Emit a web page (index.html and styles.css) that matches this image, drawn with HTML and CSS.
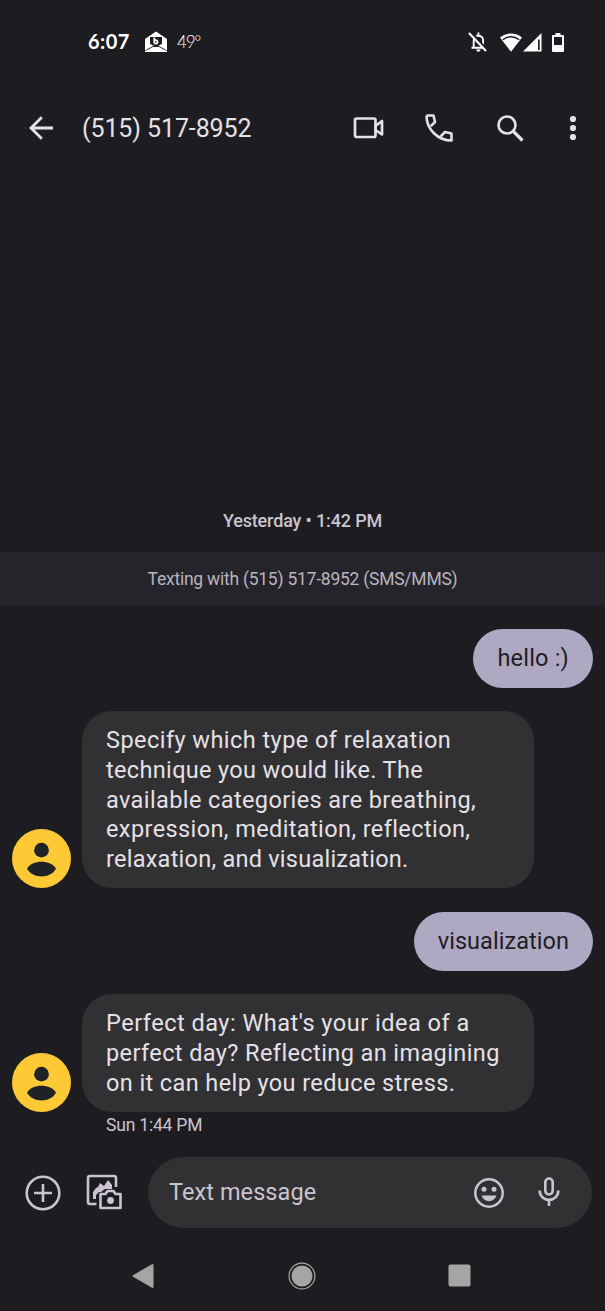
FILE: index.html
```html
<!DOCTYPE html>
<html lang="en">
<head>
<meta charset="utf-8">
<title>Messages</title>
<link rel="stylesheet" href="styles.css">
</head>
<body>
<div class="screen">
  <div class="status">
    <span class="clock">6:07</span>
    <svg class="mail" width="24" height="22" viewBox="0 0 24 22"><path fill="#fff" d="M1 8 12 .5 23 8v13H1z"/><path fill="#1d1c21" d="M6 6h12v6.800l-6 3.400-6-3.400z"/><path fill="none" stroke="#fff" stroke-width="1.800" d="M10.300 6.500v6M10.400 9.400c3-1.300 4.500 2.800 1.500 3.200l-1.500-.3"/><path fill="none" stroke="#1d1c21" stroke-width=".9" d="M1.500 19.500 9 15.500h6l7.500 4"/></svg>
    <span class="temp">49°</span>
    <svg class="bell" width="20" height="22" viewBox="0 0 20 22"><path fill="none" stroke="#fff" stroke-width="1.900" d="M3.500 16.800h14M5.700 16.500v-7c0-6.300 9.400-6.300 9.400 0v7M10.400 1.500v3"/><path fill="#fff" d="M8.300 18.500h4.200c0 3-4.200 3-4.200 0z"/><path stroke="#1d1c21" stroke-width="2.200" d="m3 1 16 17.800"/><path stroke="#fff" stroke-width="2" d="m1 2 17 18"/></svg>
    <svg class="wifi" width="22" height="19" viewBox="0 0 22 19"><path fill="#fff" d="M0 4.600C6-1 16-1 22 4.600L11 18.800z"/><path fill="none" stroke="#1d1c21" stroke-width="1.400" d="M2.800 6.700c4.800-4 11.600-4 16.400 0"/></svg>
    <svg class="signal" width="19" height="19" viewBox="0 0 19 19"><path fill="#fff" d="M18.500 0v18.500H0z"/><path fill="#1d1c21" d="M15 6.500h1.700v10.500H15z"/></svg>
    <svg class="battery" width="12" height="19" viewBox="0 0 12 19"><path fill="#fff" d="M3.500 0h5v2H11q1 0 1 1v15q0 1-1 1H1q-1 0-1-1V3q0-1 1-1h2.500z"/><path fill="#1d1c21" d="M2 4h8v8H2z"/></svg>
  </div>

  <header class="bar">
    <svg class="back" width="24" height="24" viewBox="0 0 24 24"><path fill="none" stroke="#e6e0e7" stroke-width="2.800" d="M24 12H2M12.800 1.200 2 12l10.800 10.800"/></svg>
    <h1 class="title">(515) 517-8952</h1>
    <svg class="video" width="32" height="22" viewBox="0 0 32 22"><g fill="none" stroke="#e6e0e7" stroke-width="2.700" stroke-linejoin="round"><rect x="2" y="1.500" width="20.500" height="18.500" rx="1.500"/><path d="M22.500 9 29 4v13.500L22.500 13z"/></g></svg>
    <svg class="phone" width="28" height="28" viewBox="0 0 28 28"><path fill="none" stroke="#e6e0e7" stroke-width="2.600" stroke-linejoin="round" d="M1.500 1.500h7L10 8 5.800 12.200M1.500 1.500C1.500 15.500 13 26.500 26.500 26.500v-7L20 18l-4.300 4.300"/></svg>
    <svg class="search" width="27" height="27" viewBox="0 0 27 27"><g fill="none" stroke="#e6e0e7" stroke-width="2.600"><circle cx="10" cy="10" r="8.500"/><path stroke-width="3.200" d="m16 16 9.500 9.500"/></g></svg>
    <svg class="more" width="8" height="26" viewBox="0 0 8 26"><g fill="#e6e0e7"><circle cx="4" cy="4" r="3.100"/><circle cx="4" cy="13" r="3.100"/><circle cx="4" cy="22" r="3.100"/></g></svg>
  </header>

  <main class="thread">
    <p class="date">Yesterday • 1:42 PM</p>
    <p class="notice">Texting with (515) 517-8952 (SMS/MMS)</p>
    <div class="row sent"><div class="bubble">hello :)</div></div>
    <div class="row">
      <svg class="avatar" viewBox="0 0 60 60"><circle cx="30" cy="30" r="30" fill="#fdc935"/><circle cx="30" cy="21.500" r="7.500" fill="#202326"/><path fill="#202326" d="M15.200 40.500C20 30.800 40 30.800 44.800 40.500 38.500 51 21.500 51 15.200 40.500z"/></svg>
      <div class="bubble"><span class="wider">Specify which type of relaxation</span><br><span class="snug">technique you would like. The</span><br>available categories are breathing,<br>expression, meditation, reflection,<br><span class="tight">relaxation, and visualization.</span></div>
    </div>
    <div class="row sent"><div class="bubble"><span class="narrow">visualization</span></div></div>
    <div class="row">
      <svg class="avatar" viewBox="0 0 60 60"><circle cx="30" cy="30" r="30" fill="#fdc935"/><circle cx="30" cy="21.500" r="7.500" fill="#202326"/><path fill="#202326" d="M15.200 40.500C20 30.800 40 30.800 44.800 40.500 38.500 51 21.500 51 15.200 40.500z"/></svg>
      <div class="bubble"><span class="widest">Perfect day: What's your idea of a</span><br>perfect day? Reflecting an imagining<br>on it can help you reduce stress.</div>
    </div>
    <p class="time">Sun 1:44 PM</p>
  </main>

  <div class="compose">
    <svg class="add" width="36" height="36" viewBox="0 0 36 36"><g fill="none" stroke="#cac4d0" stroke-width="2.600"><circle cx="18" cy="18" r="16.300"/><path d="M18 9v18M9 18h18"/></g></svg>
    <svg class="gallery" width="36" height="36" viewBox="0 0 36 36"><path fill="none" stroke="#cac4d0" stroke-width="2.600" d="M10.500 30H4q-2 0-2-2V4q0-2 2-2h24q2 0 2 2v9"/><path fill="#cac4d0" d="M7 25v-7l3-4 2-1 2-4 4 3 4-6 4 5v4h-7l-4 3h-2l-3 3v4z"/><path fill="none" stroke="#cac4d0" stroke-width="2.600" stroke-linejoin="round" d="M14.500 20h5l2-3h6l2 3h5v14h-20z"/><circle cx="24.500" cy="26.500" r="3.400" fill="#cac4d0"/></svg>
    <div class="field">
      <span class="placeholder">Text message</span>
      <svg class="emoji" width="30" height="30" viewBox="0 0 30 30"><circle cx="15" cy="15" r="13.700" fill="none" stroke="#cac4d0" stroke-width="2.500"/><g fill="#cac4d0"><circle cx="10" cy="11.300" r="2.500"/><circle cx="20" cy="11.300" r="2.500"/><path d="M7.500 17.500h15c-2.500 7.500-12.500 7.500-15 0z"/></g></svg>
      <svg class="mic" width="22" height="29" viewBox="0 0 22 29"><g fill="none" stroke="#cac4d0" stroke-width="2.600"><rect x="7.300" y="1.500" width="7.400" height="16" rx="3.700"/><path d="M1.700 13.500c0 12.500 18.600 12.500 18.600 0M11 22.500V29"/></g></svg>
    </div>
  </div>

  <nav class="nav">
    <svg width="22" height="26" viewBox="0 0 22 26"><path fill="#a5a5a5" stroke="#a5a5a5" stroke-width="2" stroke-linejoin="round" d="M1.500 13 20.500 2v22z"/></svg>
    <svg class="home" width="28" height="28" viewBox="0 0 28 28"><circle cx="14" cy="14" r="10.500" fill="#a5a5a5"/><circle cx="14" cy="14" r="12.900" fill="none" stroke="#a5a5a5" stroke-width="1.200"/></svg>
    <svg width="23" height="23" viewBox="0 0 23 23"><rect x=".5" y=".5" width="22" height="22" rx="2" fill="#a5a5a5"/></svg>
  </nav>
</div>
</body>
</html>
```
FILE: styles.css
```css
* { box-sizing: border-box; }
body { margin: 0; background: #1d1c21; }
h1, p { margin: 0; font-weight: 400; }
svg { display: block; flex: none; }

.screen {
  width: 605px;
  height: 1311px;
  display: flex;
  flex-direction: column;
  overflow: hidden;
  background: #1d1c21;
  color: #e6e0e7;
  font-family: Roboto, sans-serif;
  white-space: nowrap;
}

.status { height: 84px; padding-left: 88px; display: flex; align-items: center; color: #fff; }
.clock { width: 56px; padding-bottom: 2px; font: 700 20px Lato, sans-serif; letter-spacing: 0.5px; }
.temp { width: 300px; padding: 0 0 1px 9px; font: 300 17px Lato, sans-serif; letter-spacing: -1.2px; }
.wifi { margin-left: 12px; }
.signal { margin-left: 1px; }
.battery { margin-left: 10px; }

.bar { height: 88px; padding-left: 29px; display: flex; align-items: center; }
.title { width: 270px; margin-left: 29px; padding-top: 1px; font-size: 25px; letter-spacing: -0.1px; }
.video { margin-left: 1px; }
.phone { margin-left: 40px; }
.search { margin-left: 44px; }
.more { margin-left: 45px; }

.thread { flex: none; height: 972px; padding-top: 337px; }
.date { height: 43px; line-height: 24px; text-align: center; font-size: 18px; font-weight: 500; letter-spacing: -0.15px; color: #cac4d0; }
.notice { height: 53px; line-height: 54px; text-align: center; font-size: 17.5px; letter-spacing: -0.24px; background: #25242a; color: #b9b4bf; }

.row { display: flex; align-items: flex-end; gap: 11.5px; margin-top: 23.7px; padding: 0 12px 0 11.5px; }
.notice + .row { margin-top: 24px; }
.sent { justify-content: flex-end; }
.avatar { width: 59px; height: 59px; }
.bubble { width: 452px; padding: 15.2px 24px 13.8px; border-radius: 30px; background: #313133; font-size: 23.5px; line-height: 29.6px; letter-spacing: 0.4px; }
.sent .bubble { width: auto; background: #aea8c3; color: #1f1d24; letter-spacing: 0.2px; }
.notice + .sent .bubble { padding: 14.5px 24px; }
.bubble .widest { letter-spacing: 0.5px; }
.bubble .wider { letter-spacing: 0.45px; }
.bubble .snug { letter-spacing: 0.34px; }
.bubble .tight { letter-spacing: 0.25px; }
.bubble .narrow { letter-spacing: 0.05px; }
.time { padding: 1px 0 0 106px; line-height: 24px; font-size: 17.5px; letter-spacing: -0.2px; color: #cac4d0; }

.compose { height: 97px; padding: 13px 13px 0 24.5px; display: flex; align-items: flex-start; color: #cac4d0; }
.add { margin-top: 18px; }
.gallery { margin: 17px 0 0 25px; }
.field { flex: 1; height: 71px; margin-left: 26.5px; padding: 0 32.5px 0 21px; display: flex; align-items: center; border-radius: 36px; background: #313133; }
.placeholder { flex: 1; padding-bottom: 1px; font-size: 23.5px; letter-spacing: 0.08px; }
.mic { margin-left: 34px; margin-top: -3px; }

.nav { height: 69px; padding: 0 134px 0 132px; display: flex; align-items: center; justify-content: space-between; }
.home { margin-left: 2px; }
```
